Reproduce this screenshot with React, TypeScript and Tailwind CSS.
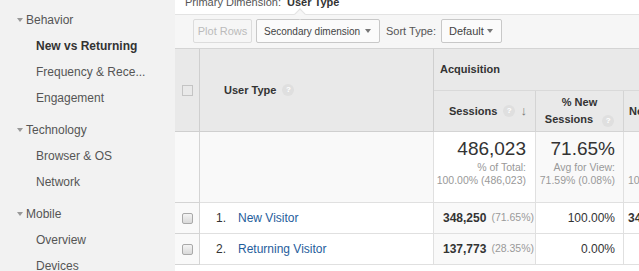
import React from "react"

const font = { fontFamily: '"Liberation Sans", Arial, sans-serif' }

function Caret({ className = "" }: { className?: string }){
 return(
  <span className={"inline-block w-0 h-0 border-l-[3px] border-r-[3px] border-t-[4px] border-l-transparent border-r-transparent " + className}/>
 )
}

function Help(){
 return(
  <span className="inline-flex items-center justify-center w-[12px] h-[12px] rounded-full bg-[#dfdfdf] text-white text-[8px] font-bold leading-none ml-[6px]">?</span>
 )
}

function Box(){
 return <span className="block w-[11px] h-[11px] rounded-[2px] border border-[#a9a9a9] bg-gradient-to-b from-[#f4f4f4] to-[#d9d9d9]"/>
}

const nav = [
 { title:"Behavior", items:["New vs Returning","Frequency & Rece...","Engagement"], active:0 },
 { title:"Technology", items:["Browser & OS","Network"], active:-1 },
 { title:"Mobile", items:["Overview","Devices"], active:-1 },
]

const rows = [
 { n:"1.", name:"New Visitor", sessions:"348,250", pct:"(71.65%)", newPct:"100.00%", users:"348,250", usersPct:"(100.00%)" },
 { n:"2.", name:"Returning Visitor", sessions:"137,773", pct:"(28.35%)", newPct:"0.00%", users:"0", usersPct:"(0.00%)" },
]

export default function App(){

 return(

  <div style={font} className="flex w-[639px] h-[271px] overflow-hidden bg-white text-[#333]">

   {/* Sidebar */}

   <aside className="w-[175px] shrink-0 bg-[#f2f2f2] pt-[7px]">
    {nav.map((g,gi)=>(
     <div key={g.title} className={gi>0 ? "mt-[6px]" : ""}>
      <div className="h-[26px] flex items-center pl-[17px] text-[12px] text-[#555]">
       <Caret className="border-t-[#999] mr-[3px]"/>
       {g.title}
      </div>
      {g.items.map((it,i)=>(
       <div key={it} className={"h-[26px] flex items-center pl-[36px] text-[12px] " + (i===g.active ? "font-bold text-[#333]" : "text-[#555]")}>
        {it}
       </div>
      ))}
     </div>
    ))}
   </aside>

   {/* Main */}

   <main className="flex-1 min-w-0 overflow-hidden flex flex-col">

    <div className="h-[14px] pl-[10px] overflow-hidden">
     <div className="-mt-[5px] text-[11px] leading-[14px] whitespace-nowrap">
      <span className="text-[#555]">Primary Dimension: </span>
      <span className="font-bold text-[#333] ml-[3px]">User Type</span>
     </div>
    </div>

    <div className="relative h-[34px] border-t border-[#e3e3e3] bg-[#f6f6f6] flex items-start pt-[4px] pl-[18px] gap-[4px] text-[11px] whitespace-nowrap">
     <span className="absolute -top-[5px] left-[121px] w-[8px] h-[8px] rotate-45 bg-[#f6f6f6] border-t border-l border-[#e3e3e3]"/>
     <div className="h-[24px] w-[59px] flex items-center justify-center border border-[#dcdcdc] rounded-[2px] text-[#bbb]">Plot Rows</div>
     <div className="h-[24px] w-[124px] flex items-center justify-between pl-[7px] pr-[8px] border border-[#c8c8c8] rounded-[2px] bg-[#fbfbfb] text-[#444] text-[10px]">
      Secondary dimension
      <Caret className="border-t-[#777]"/>
     </div>
     <div className="h-[24px] flex items-center ml-[2px] text-[#555]">Sort Type:</div>
     <div className="h-[24px] w-[61px] ml-[1px] flex items-center justify-between pl-[7px] pr-[8px] border border-[#c8c8c8] rounded-[2px] bg-[#fbfbfb] text-[#444]">
      Default
      <Caret className="border-t-[#777]"/>
     </div>
    </div>

    {/* Table */}

    <div className="grid grid-cols-[25px_234px_102px_88px_115px] grid-rows-[42px_41px_71px_31px_31px] w-max border-t border-[#d4d4d4] text-[11px]">

     <div className="row-span-2 bg-[#e9e9e9] border-r border-b border-[#cfcfcf] flex items-center justify-center">
      <span className="block w-[11px] h-[11px] border border-[#c4c4c4]"/>
     </div>
     <div className="row-span-2 bg-[#e9e9e9] border-r border-b border-[#cfcfcf] flex items-center pl-[24px] font-bold">
      User Type <Help/>
     </div>
     <div className="col-span-3 bg-[#e9e9e9] border-b border-[#d9d9d9] flex items-center pl-[6px] font-bold">
      Acquisition
     </div>

     <div className="bg-[#e9e9e9] border-r border-b border-[#d4d4d4] flex items-center pl-[15px] pr-[8px] font-bold">
      Sessions <Help/>
      <span className="ml-auto text-[#777] text-[13px] font-bold">↓</span>
     </div>
     <div className="bg-[#e9e9e9] border-r border-b border-[#d4d4d4] flex flex-col items-center justify-center font-bold leading-[17px]">
      <span>% New</span>
      <span>Sessions <Help/></span>
     </div>
     <div className="bg-[#e9e9e9] border-b border-[#d4d4d4] flex items-center pl-[5px] font-bold">
      New Users <Help/>
     </div>

     {/* Summary */}

     <div className="bg-[#f9f9f9] border-r border-b border-[#d4d4d4]"/>
     <div className="bg-[#f9f9f9] border-r border-b border-[#e0e0e0]"/>
     <div className="bg-white border-r border-b border-[#e0e0e0] flex flex-col items-end pr-[9px] pt-[5px] whitespace-nowrap">
      <span className="text-[19px] leading-[24px] text-[#333]">486,023</span>
      <span className="text-[10.5px] text-[#999] leading-[13px]">% of Total:</span>
      <span className="text-[10.5px] text-[#999] leading-[13px]">100.00% (486,023)</span>
     </div>
     <div className="bg-[#f9f9f9] border-r border-b border-[#e0e0e0] flex flex-col items-end pr-[8px] pt-[5px] whitespace-nowrap">
      <span className="text-[19px] leading-[24px] text-[#333]">71.65%</span>
      <span className="text-[10.5px] text-[#999] leading-[13px]">Avg for View:</span>
      <span className="text-[10.5px] text-[#999] leading-[13px]">71.59% (0.08%)</span>
     </div>
     <div className="bg-[#f9f9f9] border-b border-[#e0e0e0] flex flex-col items-start pl-[4px] pt-[5px] whitespace-nowrap">
      <span className="text-[19px] leading-[24px]">&nbsp;</span>
      <span className="text-[10.5px] leading-[13px]">&nbsp;</span>
      <span className="text-[10.5px] text-[#999] leading-[13px]">100.00% (348,250)</span>
     </div>

     {/* Rows */}

     {rows.map(r=>(
      <React.Fragment key={r.n}>
       <div className="bg-[#f9f9f9] border-r border-b border-[#d4d4d4] flex items-center justify-center">
        <Box/>
       </div>
       <div className="bg-white border-r border-b border-[#e0e0e0] flex items-center pl-[16px] text-[12px]">
        <span className="w-[22px] text-[#333]">{r.n}</span>
        <span className="text-[#1f5d9c]">{r.name}</span>
       </div>
       <div className="bg-[#f9f9f9] border-r border-b border-[#e0e0e0] flex items-center pl-[9px] whitespace-nowrap">
        <span className="text-[12px] font-bold">{r.sessions}</span>
        <span className="text-[10.5px] text-[#999] ml-[5px]">{r.pct}</span>
       </div>
       <div className="bg-white border-r border-b border-[#e0e0e0] flex items-center justify-end pr-[8px] text-[12px]">
        {r.newPct}
       </div>
       <div className="bg-white border-b border-[#e0e0e0] flex items-center pl-[4px] whitespace-nowrap">
        {r.users!=="0" && (
         <>
          <span className="text-[12px] font-bold">{r.users}</span>
          <span className="text-[10.5px] text-[#999] ml-[5px]">{r.usersPct}</span>
         </>
        )}
       </div>
      </React.Fragment>
     ))}

    </div>

   </main>

  </div>

 )

}
